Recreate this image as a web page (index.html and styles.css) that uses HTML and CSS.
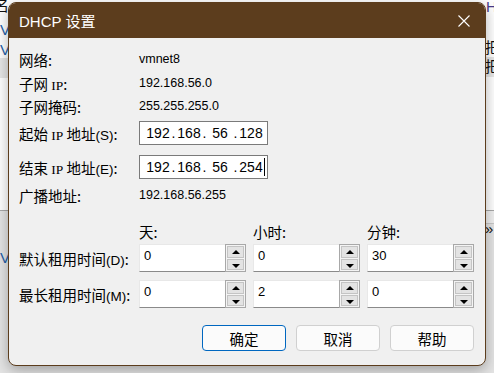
FILE: index.html
```html
<!DOCTYPE html>
<html lang="zh-CN">

<head>
  <meta charset="UTF-8">
  <title>DHCP 设置</title>
  <link rel="stylesheet" href="styles.css">
</head>

<body>

  <div class="desktop">
    <!-- window behind the dialog -->
    <div class="app">
      <div class="app-top">
        <span class="frag f-name">名</span>
        <span class="frag f-v1">V</span>
        <span class="frag f-v2">V</span>
        <div class="hl hl-left"></div>
        <div class="hl hl-right"></div>
        <span class="frag f-hc">HC</span>
        <span class="frag f-b1">把/</span>
        <span class="frag f-b2">把/</span>
      </div>
      <div class="app-bottom">
        <div class="strip"></div>
        <span class="frag f-v3">V</span>
        <span class="frag f-arrow">»</span>
      </div>
    </div>

    <div class="dialog">
      <div class="titlebar">
        <span class="title">DHCP 设置</span>
        <svg class="close" width="12" height="12" viewBox="0 0 12 12">
          <path d="M0.5 0.5 L11.5 11.5 M11.5 0.5 L0.5 11.5" stroke="#fff" stroke-width="1.1" fill="none" />
        </svg>
      </div>

      <div class="content">
        <div class="row r1">
          <span class="label">网络:</span>
          <span class="value">vmnet8</span>
        </div>
        <div class="row r2">
          <span class="label">子网 <i>IP</i>:</span>
          <span class="value">192.168.56.0</span>
        </div>
        <div class="row r3">
          <span class="label">子网掩码:</span>
          <span class="value">255.255.255.0</span>
        </div>
        <div class="row r4">
          <span class="label">起始 <i>IP</i> 地址<small>(S)</small>:</span>
          <div class="ip">
            <span class="oct">192</span><span class="dot">.</span><span class="oct">168</span><span class="dot">.</span><span class="oct">56</span><span class="dot">.</span><span class="oct">128</span>
          </div>
        </div>
        <div class="row r5">
          <span class="label">结束 <i>IP</i> 地址<small>(E)</small>:</span>
          <div class="ip">
            <span class="oct">192</span><span class="dot">.</span><span class="oct">168</span><span class="dot">.</span><span class="oct">56</span><span class="dot">.</span><span class="oct">254<span class="caret"></span></span>
          </div>
        </div>
        <div class="row r6">
          <span class="label">广播地址:</span>
          <span class="value">192.168.56.255</span>
        </div>

        <div class="lease-head">
          <span class="label"></span>
          <span class="col">天:</span>
          <span class="col">小时:</span>
          <span class="col">分钟:</span>
        </div>
        <div class="lease-row">
          <span class="label">默认租用时间<small>(D)</small>:</span>
          <div class="spin"><span class="field">0</span><span class="arrows"><b class="up"></b><b class="down"></b></span></div>
          <div class="spin"><span class="field">0</span><span class="arrows"><b class="up"></b><b class="down"></b></span></div>
          <div class="spin"><span class="field">30</span><span class="arrows"><b class="up"></b><b class="down"></b></span></div>
        </div>
        <div class="lease-row second">
          <span class="label">最长租用时间<small>(M)</small>:</span>
          <div class="spin"><span class="field">0</span><span class="arrows"><b class="up"></b><b class="down"></b></span></div>
          <div class="spin"><span class="field">2</span><span class="arrows"><b class="up"></b><b class="down"></b></span></div>
          <div class="spin"><span class="field">0</span><span class="arrows"><b class="up"></b><b class="down"></b></span></div>
        </div>

        <div class="actions">
          <button class="button default">确定</button>
          <button class="button">取消</button>
          <button class="button">帮助</button>
        </div>
      </div>
    </div>
  </div>

</body>

</html>
```

FILE: styles.css
```css
body {
  margin: 0;
  padding: 0;
  font-family: "Noto Sans CJK SC", sans-serif;
  overflow: hidden;
}

.desktop {
  position: relative;
  width: 494px;
  height: 373px;
}

/* background window */
.app-top {
  position: relative;
  height: 210px;
  background-color: #ffffff;
  border-bottom: 1px solid #a8a8a8;
}

.app-bottom {
  position: relative;
  height: 162px;
  background-color: #e4e4e4;
}

.strip {
  position: absolute;
  right: 0;
  top: 0;
  width: 12px;
  height: 12px;
  background-color: #f0f0f0;
  border-bottom: 1px solid #c8c8c8;
}

.frag {
  position: absolute;
  font-family: "Liberation Sans", sans-serif;
  font-size: 15px;
  color: #111;
}

.f-name { left: -6px; top: -6px; font-family: "Noto Sans CJK SC", sans-serif; }
.f-v1 { left: 0; top: 21px; color: #1f5fa8; }
.f-v2 { left: 0; top: 41px; color: #1f5fa8; }
.f-hc { left: 486px; top: -2px; color: #4a3a8a; }
.f-b1 { left: 485px; top: 36px; font-family: "Noto Sans CJK SC", sans-serif; }
.f-b2 { left: 485px; top: 55px; font-family: "Noto Sans CJK SC", sans-serif; }
.f-v3 { left: 0; top: 38px; color: #1f5fa8; }
.f-arrow { left: 485px; top: 9px; }

.hl {
  position: absolute;
  height: 20px;
  background-color: #e6e6e6;
}

.hl-left {
  left: 0;
  top: 58px;
  width: 10px;
}

.hl-right {
  right: 0;
  top: 57px;
  width: 10px;
}

/* dialog */
.dialog {
  position: absolute;
  left: 8px;
  top: 2px;
  width: 478px;
  height: 364px;
  box-sizing: border-box;
  border: 1px solid #5c3d1d;
  border-radius: 8px;
  background-color: #f0f0f0;
  box-shadow: 0 4px 14px rgba(0, 0, 0, 0.3);
  overflow: hidden;
}

.titlebar {
  display: flex;
  align-items: center;
  justify-content: space-between;
  height: 35px;
  padding: 0 15px 0 10px;
  background-color: #5c3d1d;
  color: white;
}

.title {
  font-family: "Liberation Sans", "Noto Sans CJK SC", sans-serif;
  font-size: 15px;
}

.content {
  padding: 10px 11px 0 10px;
  color: #000;
}

.row {
  display: flex;
  align-items: center;
  height: 22px;
}

.r2 { margin-top: 2px; }
.r3 { margin-top: 1px; }
.r4 { margin-top: 4px; height: 24px; }
.r5 { margin-top: 10px; height: 24px; }
.r6 { margin-top: 5px; }

.label {
  width: 120px;
  flex-shrink: 0;
  font-size: 14.5px;
  white-space: nowrap;
}

.label i {
  font-style: normal;
  font-family: "Liberation Serif", serif;
  font-size: 13.5px;
}

.label small {
  font-family: "Liberation Sans", sans-serif;
  font-size: 13.5px;
}

.value {
  font-family: "Liberation Sans", sans-serif;
  font-size: 12.5px;
}

.ip {
  display: flex;
  align-items: center;
  width: 129px;
  height: 24px;
  box-sizing: border-box;
  padding-left: 6px;
  background-color: white;
  border: 1px solid #7a7a7a;
  font-family: "Liberation Sans", sans-serif;
  font-size: 14px;
}

.oct {
  position: relative;
  width: 24px;
  text-align: center;
}

.dot {
  width: 7px;
  text-align: center;
}

.caret {
  position: absolute;
  right: -2px;
  top: -1px;
  width: 1px;
  height: 18px;
  background-color: #000;
}

/* lease time */
.lease-head {
  display: flex;
  align-items: center;
  gap: 7px;
  height: 18px;
  margin-top: 16px;
}

.lease-head .label {
  width: 113px;
}

.lease-head .col {
  width: 107px;
  font-size: 14.5px;
}

.lease-row {
  display: flex;
  align-items: center;
  gap: 7px;
  height: 28px;
  margin-top: 4px;
}

.lease-row.second {
  margin-top: 8px;
}

.lease-row .label {
  width: 113px;
}

.spin {
  display: flex;
  width: 107px;
  height: 28px;
}

.field {
  flex: 1;
  box-sizing: border-box;
  padding: 3px 0 0 4px;
  background-color: white;
  border-left: 1px solid #e8e8e8;
  border-top: 1px solid #e8e8e8;
  border-bottom: 1px solid #8a8a8a;
  font-family: "Liberation Sans", sans-serif;
  font-size: 13px;
}

.arrows {
  display: flex;
  flex-direction: column;
  gap: 1px;
  width: 21px;
  box-sizing: border-box;
  padding: 1px;
  border: 1px solid #a8a8a8;
  background-color: #f4f4f4;
}

.arrows b {
  flex: 1;
  position: relative;
  background-color: #e3e3e3;
  border: 1px solid #c4c4c4;
}

.arrows b::after {
  content: "";
  position: absolute;
  left: 4px;
  border-left: 4px solid transparent;
  border-right: 4px solid transparent;
}

.arrows .up::after {
  top: 3px;
  border-bottom: 4px solid #000;
}

.arrows .down::after {
  top: 4px;
  border-top: 4px solid #000;
}

/* buttons */
.actions {
  display: flex;
  justify-content: flex-end;
  gap: 10px;
  margin-top: 17px;
}

.button {
  width: 84px;
  height: 26px;
  padding: 0;
  background-color: #fbfbfb;
  border: 1px solid #d0d0d0;
  border-radius: 4px;
  font-family: "Noto Sans CJK SC", sans-serif;
  font-size: 14.5px;
  color: #000;
}

.button.default {
  border-color: #0067c0;
}
```
